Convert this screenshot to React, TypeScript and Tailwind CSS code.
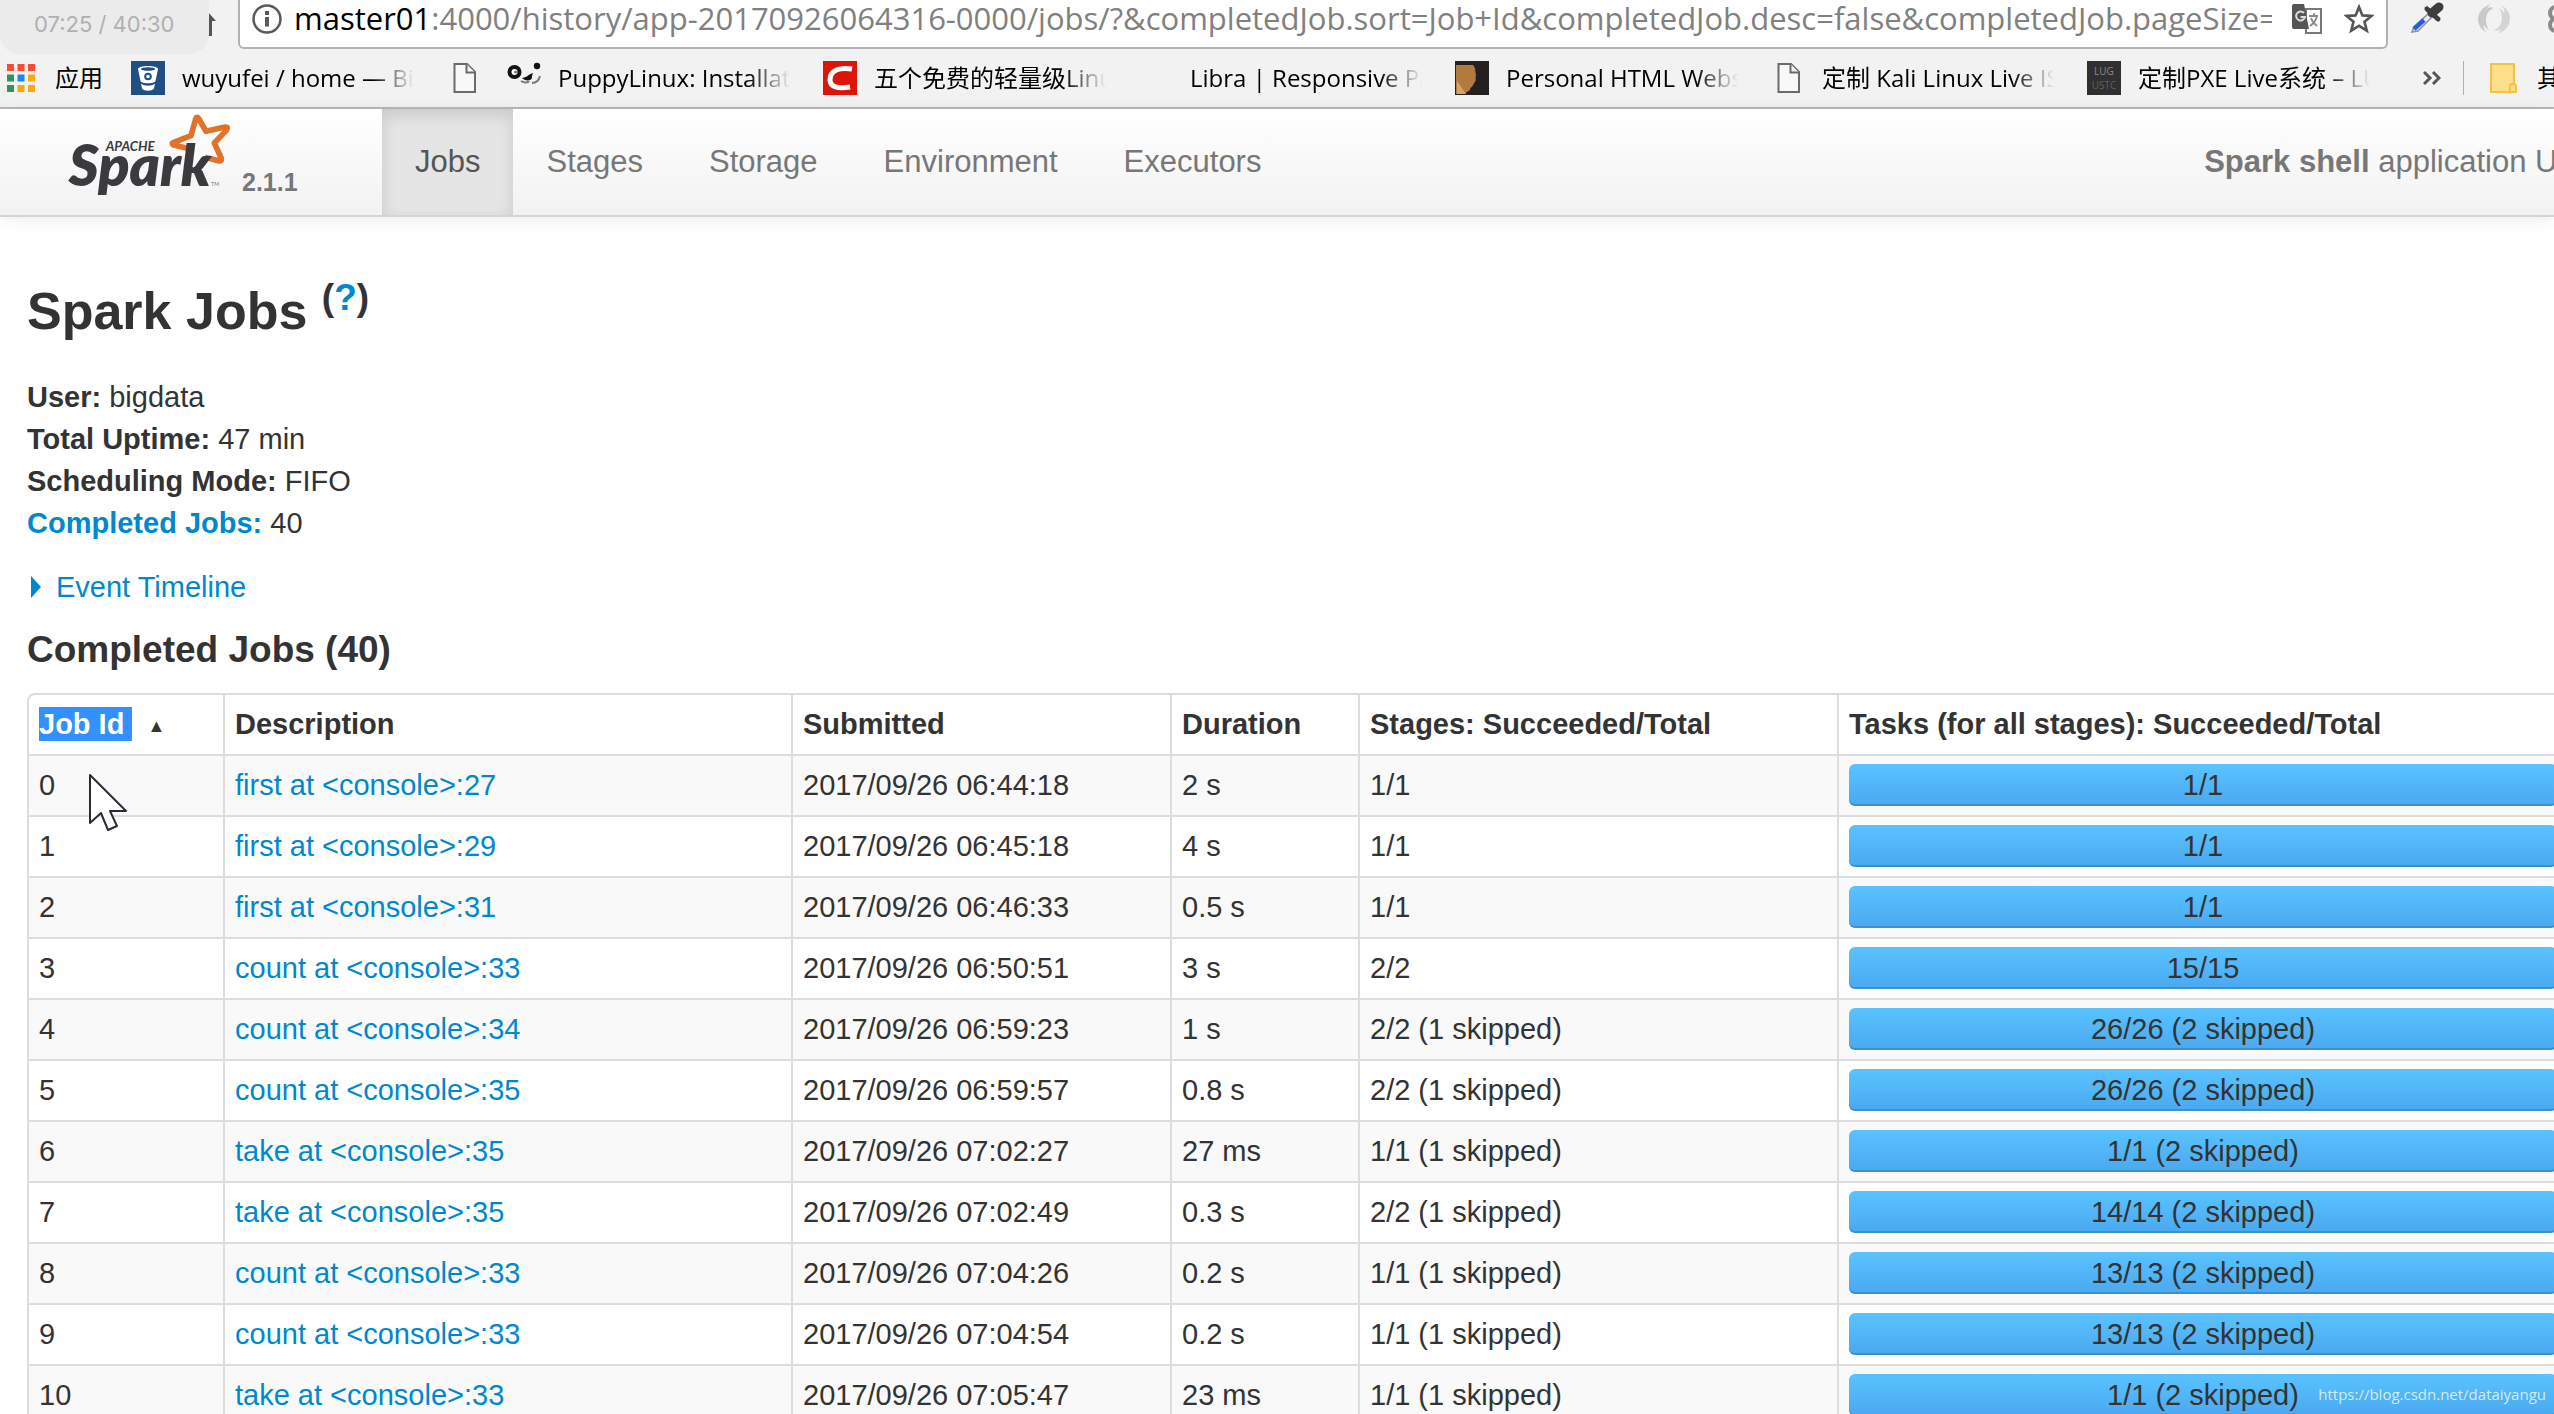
import type { ReactNode } from "react";

const NAV_ITEMS = ["Jobs", "Stages", "Storage", "Environment", "Executors"];

const JOBS = [
  { id: 0, description: "first at <console>:27", submitted: "2017/09/26 06:44:18", duration: "2 s", stages: "1/1", tasks: "1/1" },
  { id: 1, description: "first at <console>:29", submitted: "2017/09/26 06:45:18", duration: "4 s", stages: "1/1", tasks: "1/1" },
  { id: 2, description: "first at <console>:31", submitted: "2017/09/26 06:46:33", duration: "0.5 s", stages: "1/1", tasks: "1/1" },
  { id: 3, description: "count at <console>:33", submitted: "2017/09/26 06:50:51", duration: "3 s", stages: "2/2", tasks: "15/15" },
  { id: 4, description: "count at <console>:34", submitted: "2017/09/26 06:59:23", duration: "1 s", stages: "2/2 (1 skipped)", tasks: "26/26 (2 skipped)" },
  { id: 5, description: "count at <console>:35", submitted: "2017/09/26 06:59:57", duration: "0.8 s", stages: "2/2 (1 skipped)", tasks: "26/26 (2 skipped)" },
  { id: 6, description: "take at <console>:35", submitted: "2017/09/26 07:02:27", duration: "27 ms", stages: "1/1 (1 skipped)", tasks: "1/1 (2 skipped)" },
  { id: 7, description: "take at <console>:35", submitted: "2017/09/26 07:02:49", duration: "0.3 s", stages: "2/2 (1 skipped)", tasks: "14/14 (2 skipped)" },
  { id: 8, description: "count at <console>:33", submitted: "2017/09/26 07:04:26", duration: "0.2 s", stages: "1/1 (1 skipped)", tasks: "13/13 (2 skipped)" },
  { id: 9, description: "count at <console>:33", submitted: "2017/09/26 07:04:54", duration: "0.2 s", stages: "1/1 (1 skipped)", tasks: "13/13 (2 skipped)" },
  { id: 10, description: "take at <console>:33", submitted: "2017/09/26 07:05:47", duration: "23 ms", stages: "1/1 (1 skipped)", tasks: "1/1 (2 skipped)" },
];

function PageIcon() {
  return (
    <svg viewBox="0 0 34 34" className="size-[34px] shrink-0" fill="#f8f8f8" stroke="#6a6a6a" strokeWidth="2">
      <path d="M7.500 3H20L28 11V31H7.500Z" />
      <path d="M19.500 3V11.500H28" />
    </svg>
  );
}

function BucketIcon() {
  return (
    <svg viewBox="0 0 34 34" className="size-[34px] shrink-0">
      <rect width="34" height="34" fill="#205081" />
      <path d="M7 8c0-4 20-4 20 0l-2.500 12c-1 3-14 3-15 0Z" fill="#fff" />
      <ellipse cx="17" cy="8" rx="7" ry="1.800" fill="#205081" />
      <circle cx="17" cy="15.500" r="3.800" fill="#205081" />
      <circle cx="17" cy="15.500" r="1.800" fill="#fff" />
      <path d="M10 22.500c3 3 11 3 14 0l-1 5c-2 3-10 3-12 0Z" fill="#fff" />
    </svg>
  );
}

function PuppyIcon() {
  return (
    <svg viewBox="0 0 34 34" className="size-[34px] shrink-0">
      <circle cx="7.500" cy="11" r="5" fill="#fff" stroke="#111" strokeWidth="4" />
      <circle cx="8.500" cy="11" r="1.500" fill="#777" />
      <circle cx="30" cy="5" r="3.200" fill="#111" />
      <path d="M15 17c4 0 7-4 11-5-2 4 0 6-3 7-3 1-6 0-8-2Z" fill="#111" />
      <path d="M14 20c3 2 7 2 8 0m3 2c4 0 7-3 8-7" fill="none" stroke="#777" strokeWidth="2" />
    </svg>
  );
}

function CsdnIcon() {
  return (
    <svg viewBox="0 0 34 34" className="size-[34px] shrink-0">
      <rect width="34" height="34" fill="#dd1508" />
      <path d="M29 8C17 6 7 9 7 19c0 7 8 9 20 7" fill="none" stroke="#fff" strokeWidth="5" />
    </svg>
  );
}

function PortraitIcon() {
  return (
    <svg viewBox="0 0 34 34" className="size-[34px] shrink-0">
      <rect width="34" height="34" fill="#23211f" />
      <path d="M1 4h17c3 3 2 7 3 10-1 3 1 5-2 8-1 4-4 4-4 7l-6 4H1Z" fill="#b27a3c" />
      <path d="M2 20l9 13H2Z" fill="#d6a468" />
    </svg>
  );
}

function LugIcon() {
  return (
    <span className="flex size-[34px] shrink-0 flex-col items-center justify-center gap-1 bg-[#303030] text-[10px] leading-none text-[#8a8a8a]">
      <span>LUG</span>
      <span className="text-[#606060]">USTC</span>
    </span>
  );
}

function Bookmark({ icon, children }: { icon?: ReactNode; children: ReactNode }) {
  return (
    <a href="#" className="flex w-[316px] shrink-0 items-center gap-[17px] pr-7">
      {icon ?? <span className="size-[34px] shrink-0" />}
      <span className="min-w-0 flex-1 overflow-hidden whitespace-nowrap [mask-image:linear-gradient(to_right,black_80%,transparent_98%)]">
        {children}
      </span>
    </a>
  );
}

function AppsIcon() {
  return (
    <svg viewBox="0 0 28 28" className="size-7 shrink-0">
      <path d="M0 0h7v7H0zM10.500 0h7v7h-7zM21 0h7v7h-7z" fill="#ff4a32" />
      <path d="M0 10.500h7v7H0zM0 21h7v7H0z" fill="#2c955a" />
      <path d="M10.500 10.500h7v7h-7z" fill="#1a86f5" />
      <path d="M21 10.500h7v7h-7zM10.500 21h7v7h-7zM21 21h7v7h-7z" fill="#fba90a" />
    </svg>
  );
}

function AddressBar() {
  return (
    <div className="flex h-[49px] items-start">
      {/* Tail of the reload button, mostly under the player clock */}
      <div className="flex w-[238px] shrink-0 justify-end pt-3 pr-[21px]">
        <svg viewBox="0 0 10 24" className="h-6 w-[10px]">
          <path d="M1 24V0l8 9H5v15Z" fill="#555" />
        </svg>
      </div>
      <div className="flex h-[49px] min-w-0 flex-1 items-start rounded-b-md border-2 border-t-0 border-[#b2b2b2] bg-white pr-3 pl-3">
        <svg viewBox="0 0 30 30" className="mt-1 size-[30px] shrink-0" fill="none" stroke="#5a5a5a">
          <circle cx="15" cy="15" r="13.500" strokeWidth="2.500" />
          <path d="M15 13v9.500M15 7v4" strokeWidth="4" />
        </svg>
        <div className="ml-3 h-[40px] min-w-0 flex-1 overflow-hidden text-[31px] leading-[36px] whitespace-nowrap text-[#808080]">
          <span className="text-black">master01</span>
          :4000/history/app-20170926064316-0000/jobs/?&amp;completedJob.sort=Job+Id&amp;completedJob.desc=false&amp;completedJob.pageSize=100
        </div>
        <button type="button" aria-label="Translate" className="mt-1 ml-5 shrink-0">
          <svg viewBox="0 0 30 30" className="size-[30px]">
            <path d="M14 5h15v24H14Z" fill="#fff" stroke="#777" strokeWidth="2" />
            <path d="M2 0h10l5 25H2q-2 0-2-2V2q0-2 2-2Z" fill="#555" />
            <path d="M12 9a4.500 4.500 0 1 0 1 4H8.500" fill="none" stroke="#ddd" strokeWidth="2" />
            <path d="M17 12h9m-4-3v3m3 0c-1 5-4 8-7 10m1-8c1 4 4 6 6 8" fill="none" stroke="#888" strokeWidth="1.800" />
          </svg>
        </button>
        <button type="button" aria-label="Bookmark this page" className="mt-1 ml-[22px] shrink-0">
          <svg viewBox="0 0 30 30" className="size-[30px]" fill="none" stroke="#555" strokeWidth="2.600">
            <path d="M15 3l3.400 8.400 9.100.600-7 5.800 2.300 8.800L15 21.800 7.200 26.600l2.300-8.800-7-5.800 9.100-.600Z" />
          </svg>
        </button>
      </div>
      <div className="flex w-[166px] shrink-0 items-start gap-[33px] overflow-hidden pt-[2px] pl-[22px]">
        <button type="button" aria-label="Color picker" className="shrink-0">
          <svg viewBox="0 0 34 32" className="h-8 w-[34px]">
            <path d="M19 11L4 25l-2 5 6-1L22 15Z" fill="#e8ecf4" stroke="#8a8f99" strokeWidth="1.500" />
            <path d="M14 18L4 27" stroke="#2b5be0" strokeWidth="4.500" />
            <path d="M17 7l11 10" stroke="#3d3d3d" strokeWidth="5" strokeLinecap="round" />
            <path d="M22 11l7-6" stroke="#3d3d3d" strokeWidth="9" strokeLinecap="round" />
          </svg>
        </button>
        <button type="button" aria-label="Extension" className="shrink-0">
          <svg viewBox="0 0 34 34" className="size-[34px]">
            <path d="M14 2C-2 7-3 24 10 31c-3-3-4-6-3-8 1 2 3 4 5 5C7 20 8 9 17 6c-3-1-5-1-7 1 1-2 2-4 4-5Z" fill="#c9c9c9" />
            <path d="M20 32C36 27 37 10 24 3c3 3 4 6 3 8-1-2-3-4-5-5 5 8 4 19-5 22 3 1 5 1 7-1-1 2-2 4-4 5Z" fill="#d4d4d4" />
          </svg>
        </button>
        <button type="button" aria-label="More extensions" className="shrink-0">
          <svg viewBox="0 0 30 34" className="h-[34px] w-[30px]" fill="none" stroke="#8a8a8a" strokeWidth="4">
            <circle cx="12" cy="11" r="6" />
            <circle cx="12" cy="23" r="6" />
          </svg>
        </button>
      </div>
    </div>
  );
}

function BookmarksBar() {
  return (
    <div className="flex h-[60px] items-center overflow-hidden border-b-2 border-[#b8b8b8] pl-[7px] text-[24px] text-black">
      <a href="#" className="flex w-[124px] shrink-0 items-center gap-5">
        <AppsIcon />
        应用
      </a>
      <Bookmark icon={<BucketIcon />}>wuyufei / home — Bitbucket</Bookmark>
      <a href="#" aria-label="Untitled page" className="w-[60px] shrink-0">
        <PageIcon />
      </a>
      <Bookmark icon={<PuppyIcon />}>PuppyLinux: Installation</Bookmark>
      <Bookmark icon={<CsdnIcon />}>五个免费的轻量级Linux</Bookmark>
      <Bookmark>Libra | Responsive Page</Bookmark>
      <Bookmark icon={<PortraitIcon />}>Personal HTML Website</Bookmark>
      <Bookmark icon={<PageIcon />}>定制 Kali Linux Live ISO</Bookmark>
      <Bookmark icon={<LugIcon />}>定制PXE Live系统 – LUG</Bookmark>
      <button type="button" aria-label="More bookmarks" className="ml-5 shrink-0">
        <svg viewBox="0 0 18 16" className="h-4 w-[18px]" fill="none" stroke="#555" strokeWidth="3">
          <path d="M1 2l6 6-6 6M10 2l6 6-6 6" />
        </svg>
      </button>
      <span className="ml-[22px] h-[34px] w-px shrink-0 bg-[#b0b0b0]" />
      <a href="#" className="ml-[26px] flex shrink-0 items-center gap-5 whitespace-nowrap">
        <svg viewBox="0 0 27 30" className="h-[30px] w-[27px]" fill="#ffe08a" stroke="#f5c344" strokeWidth="2">
          <path d="M1 1h23v20q2 0 2 2v6H1Z" />
          <path d="M20 29v-6q0-2 2-2h2" />
        </svg>
        其他书签
      </a>
    </div>
  );
}

function SparkLogo() {
  return (
    <svg viewBox="205 335 489 264" className="h-[88px] w-[163px] shrink-0" role="img" aria-label="Apache Spark">
      <path
        d="M572 446L522 434Q514 429 522 426L574 406L588 356Q592 346 598 356L619 393L676 380Q688 379 680 390L644 428L665 474Q667 484 656 481L616 471"
        fill="none"
        stroke="#e2722a"
        strokeWidth="17"
        strokeLinejoin="round"
      />
      <text x="318" y="453" fontSize="40" fill="#3c3a3e" className="font-['Lato'] font-bold italic">
        APACHE
      </text>
      <text x="207" y="558" fontSize="172" fill="#3c3a3e" className="font-['Lato'] font-extrabold italic">
        Spark
      </text>
      <text x="634" y="558" fontSize="16" fill="#777" className="font-['Lato']">
        TM
      </text>
    </svg>
  );
}

function Navbar() {
  return (
    <nav className="flex h-[108px] items-stretch overflow-hidden border-b-2 border-[#d4d4d4] bg-linear-to-b from-white to-[#f2f2f2] text-[31px] text-[#777]">
      <a href="#" className="flex w-[382px] shrink-0 items-start gap-[11px] pt-[3px] pl-[68px]">
        <SparkLogo />
        <span className="pt-14 text-[25px] leading-7 font-bold">2.1.1</span>
      </a>
      {NAV_ITEMS.map((item) => (
        <a
          key={item}
          href="#"
          className={
            item === "Jobs"
              ? "flex items-center bg-[#e5e5e5] px-[33px] text-[#555] shadow-[inset_0_6px_16px_rgba(0,0,0,0.125)]"
              : "flex items-center px-[33px]"
          }
        >
          {item}
        </a>
      ))}
      <p className="-mr-3 ml-auto flex items-center whitespace-pre">
        <strong>Spark shell</strong> application UI
      </p>
    </nav>
  );
}

function JobsTable() {
  return (
    <div className="mt-[22px] -mr-[13px]">
      <table className="w-full table-fixed border-separate border-spacing-0 rounded-tl-lg border-t-2 border-l-2 border-[#ddd] text-left leading-[42px] whitespace-nowrap">
        <colgroup>
          <col className="w-[194px]" />
          <col className="w-[568px]" />
          <col className="w-[379px]" />
          <col className="w-[188px]" />
          <col className="w-[479px]" />
          <col />
        </colgroup>
        <thead>
          <tr className="*:border-b-2 *:border-[#ddd] *:px-[10px] *:pt-2 *:pb-[9px]">
            <th>
              <span className="inline-block bg-[#3390ff] pr-2 leading-[34px] text-white">Job Id</span>
              <span className="ml-[15px] align-middle text-[18px] leading-none">▲</span>
            </th>
            <th className="border-l-2">Description</th>
            <th className="border-l-2">Submitted</th>
            <th className="border-l-2">Duration</th>
            <th className="border-l-2">Stages: Succeeded/Total</th>
            <th className="border-l-2">Tasks (for all stages): Succeeded/Total</th>
          </tr>
        </thead>
        <tbody>
          {JOBS.map((job) => (
            <tr key={job.id} className="odd:bg-[#f9f9f9] *:border-b-2 *:border-[#ddd] *:px-[10px] *:pt-2 *:pb-[9px]">
              <td>{job.id}</td>
              <td className="border-l-2">
                <a href="#" className="text-[#0088cc]">
                  {job.description}
                </a>
              </td>
              <td className="border-l-2">{job.submitted}</td>
              <td className="border-l-2">{job.duration}</td>
              <td className="border-l-2">{job.stages}</td>
              <td className="border-l-2">
                <div className="h-[42px] rounded-md bg-linear-to-b from-[#5ac3ff] to-[#4aa8f0] text-center shadow-[inset_0_-2px_0_rgba(0,0,0,0.15)]">
                  {job.tasks}
                </div>
              </td>
            </tr>
          ))}
        </tbody>
      </table>
    </div>
  );
}

export default function App() {
  return (
    <div className="relative h-screen overflow-hidden bg-white font-['Liberation_Sans',Arial,sans-serif] text-[29px] text-[#333]">
      <header className="bg-[#f2f2f2] font-['Open_Sans','Noto_Sans_CJK_SC',sans-serif]">
        <AddressBar />
        <BookmarksBar />
      </header>
      <div className="shadow-[0_2px_16px_rgba(0,0,0,0.08)]">
        <Navbar />
      </div>

      <main className="pt-[52px] pl-[27px] leading-[42px]">
        <h1 className="text-[52px] leading-[84px] font-bold">
          Spark Jobs{" "}
          <sup className="top-[-19px] text-[37px]">
            (
            <a href="#" className="text-[#0088cc]">
              ?
            </a>
            )
          </sup>
        </h1>
        <ul className="mt-[23px]">
          <li>
            <strong>User:</strong> bigdata
          </li>
          <li>
            <strong>Total Uptime:</strong> 47 min
          </li>
          <li>
            <strong>Scheduling Mode:</strong> FIFO
          </li>
          <li>
            <a href="#completed" className="font-bold text-[#0088cc]">
              Completed Jobs:
            </a>{" "}
            40
          </li>
        </ul>
        <button type="button" className="mt-[22px] flex items-center gap-[15px] pl-1 text-[#0088cc]">
          <svg viewBox="0 0 10 22" className="h-[22px] w-[10px]">
            <path d="M0 0L10 11L0 22Z" fill="#0088cc" />
          </svg>
          Event Timeline
        </button>
        <h2 id="completed" className="mt-[21px] text-[37px] font-bold">
          Completed Jobs (40)
        </h2>
        <JobsTable />
      </main>

      {/* Player clock */}
      <div className="absolute top-0 left-0 h-[54px] w-[209px] rounded-b-[20px] bg-[#ebebeb] pt-[10px] pl-[34px] font-['Inter',sans-serif] text-[22px] leading-7 text-[#b0b0b0]">
        07:25 / 40:30
      </div>

      {/* Mouse pointer */}
      <svg viewBox="0 0 40 60" className="absolute top-[773px] left-[88px] h-[60px] w-10">
        <path
          d="M2 2V50L13 40L20 57L29 53L22 38H38Z"
          fill="#fff"
          stroke="#2b2b35"
          strokeWidth="2"
          strokeLinejoin="round"
        />
      </svg>

      <p className="absolute right-2 bottom-2 font-['Open_Sans',sans-serif] text-[15px] leading-6 text-white/75">
        https://blog.csdn.net/dataiyangu
      </p>
    </div>
  );
}
